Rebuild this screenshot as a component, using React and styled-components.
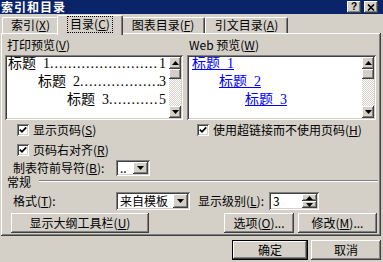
import React from 'react';
import styled, { createGlobalStyle, css } from 'styled-components';

const GlobalStyle = createGlobalStyle`
  *, *::before, *::after { box-sizing: border-box; }
  html, body { margin: 0; padding: 0; background: #d4d0c8; }
  body {
    font-family: "Noto Sans CJK SC", "Liberation Sans", sans-serif;
    font-size: 12px;
    line-height: 14px;
    color: #000;
  }
  u { text-decoration: underline; text-underline-offset: 1px; }
`;

const raised = css`
  box-shadow: inset -1px -1px #404040, inset 1px 1px #fff,
    inset -2px -2px #808080, inset 2px 2px #d4d0c8;
`;

const sunken = css`
  box-shadow: inset 1px 1px #808080, inset -1px -1px #fff,
    inset 2px 2px #404040, inset -2px -2px #d4d0c8;
`;

const Dialog = styled.div`
  width: 383px;
  height: 262px;
  background: #d4d0c8;
  overflow: hidden;
  display: flex;
  flex-direction: column;
`;

const TitleBar = styled.div`
  height: 14px;
  background: #0a246a;
  display: flex;
  align-items: center;
  justify-content: space-between;
  padding: 0 5px 0 1px;
`;

const Title = styled.div`
  color: #fff;
  font-weight: bold;
  font-size: 12px;
  line-height: 14px;
  letter-spacing: 1px;
`;

const CaptionButtons = styled.div`
  display: flex;
  gap: 3px;
`;

const CaptionButton = styled.div`
  width: 14px;
  height: 12px;
  background: #d4d0c8;
  ${raised};
  display: flex;
  align-items: center;
  justify-content: center;
  font-family: "Liberation Sans", sans-serif;
  font-weight: bold;
  font-size: 10px;
  line-height: 12px;
`;

const TabStrip = styled.div`
  height: 19px;
  display: flex;
  align-items: flex-end;
  padding-left: 2px;
`;

const Tab = styled.div`
  position: relative;
  width: ${p => p.w}px;
  height: ${p => (p.active ? 20 : 16)}px;
  margin: ${p => (p.active ? '0 -2px -2px -2px' : '0')};
  z-index: ${p => (p.active ? 2 : 1)};
  background: #d4d0c8;
  border-top: 1px solid #fff;
  border-left: 1px solid #fff;
  border-right: 1px solid #404040;
  border-radius: 2px 2px 0 0;
  box-shadow: inset -1px 0 #808080;
  display: flex;
  justify-content: center;
  padding-top: ${p => (p.active ? 1 : 0)}px;
  line-height: 14px;
  white-space: nowrap;
`;

const Focus = styled.span`
  outline: 1px dotted #000;
  padding: 0 2px;
  height: 15px;
`;

const Panel = styled.div`
  height: 203px;
  margin: 0 2px 0 1px;
  padding: 2px;
  ${raised};
  display: flex;
  flex-direction: column;
`;

const TopRow = styled.div`
  display: flex;
  gap: 4px;
  padding-left: 2px;
`;

const Column = styled.div`
  width: ${p => p.w}px;
  display: flex;
  flex-direction: column;
`;

const SectionLabel = styled.div`
  height: 20px;
  line-height: 20px;
  padding-left: 2px;
  white-space: nowrap;
`;

const PreviewBox = styled.div`
  height: 65px;
  background: #fff;
  ${sunken};
  padding: 2px;
  display: flex;
`;

const PreviewList = styled.div`
  flex: 1;
  padding: ${p => (p.web ? '0 0 0 3px' : '0 3px 0 1px')};
  margin-top: -2px;
  overflow: hidden;
`;

const TocLine = styled.div`
  display: flex;
  height: 18px;
  line-height: 18px;
  padding-left: ${p => p.indent}px;
  font-family: "Liberation Serif", "Noto Sans CJK SC", serif;
  font-size: 14px;
  white-space: nowrap;
`;

const Leader = styled.span`
  flex: 1;
  overflow: hidden;
  letter-spacing: 1px;
  &::before {
    content: "..............................................................";
  }
`;

const WebLink = styled.span`
  color: #0000ff;
  text-decoration: underline;
`;

const ScrollBar = styled.div`
  width: 12px;
  display: flex;
  flex-direction: column;
  background: repeating-conic-gradient(#d4d0c8 0 25%, #fff 0 50%) 0 0 / 2px 2px;
`;

const ScrollArrow = styled.div`
  width: 12px;
  height: 12px;
  background: #d4d0c8;
  ${raised};
  display: flex;
  align-items: center;
  justify-content: center;
`;

const ScrollThumb = styled.div`
  width: 12px;
  height: 10px;
  background: #d4d0c8;
  ${raised};
`;

const Spacer = styled.div`
  flex: 1;
`;

const CheckRow = styled.label`
  display: flex;
  align-items: center;
  gap: 4px;
  height: 16px;
  line-height: 14px;
  margin-top: ${p => p.mt}px;
  padding-left: ${p => p.indent}px;
  white-space: nowrap;
`;

const CheckBox = styled.span`
  width: 12px;
  height: 12px;
  background: #fff;
  ${sunken};
  display: flex;
  align-items: center;
  justify-content: center;
  flex: none;
`;

const FieldRow = styled.div`
  display: flex;
  align-items: center;
  height: ${p => p.h}px;
  line-height: 14px;
  margin-top: ${p => p.mt}px;
  padding-left: ${p => p.indent}px;
  white-space: nowrap;
`;

const FieldLabel = styled.span`
  width: ${p => p.w}px;
  padding-left: ${p => p.pl || 0}px;
  flex: none;
`;

const Combo = styled.div`
  width: ${p => p.w}px;
  height: 100%;
  background: #fff;
  ${sunken};
  padding: 2px;
  display: flex;
  flex: none;
`;

const ComboText = styled.div`
  flex: 1;
  padding-left: 2px;
  line-height: ${p => p.lh}px;
  white-space: nowrap;
`;

const DropButton = styled.div`
  width: 15px;
  background: #d4d0c8;
  ${raised};
  display: flex;
  align-items: center;
  justify-content: center;
`;

const SpinButtons = styled.div`
  width: 15px;
  display: flex;
  flex-direction: column;
`;

const SpinButton = styled.div`
  flex: 1;
  background: #d4d0c8;
  ${raised};
  display: flex;
  align-items: center;
  justify-content: center;
`;

const GroupHeader = styled.div`
  display: flex;
  align-items: center;
  gap: 8px;
  height: 12px;
  line-height: 12px;
  padding: 0 1px 0 4px;
  white-space: nowrap;
`;

const EtchedLine = styled.div`
  flex: 1;
  height: 2px;
  border-top: 1px solid #808080;
  border-bottom: 1px solid #fff;
  margin-top: -2px;
`;

const ButtonRow = styled.div`
  display: flex;
  align-items: center;
  height: 20px;
  margin-top: 3px;
  padding-left: 8px;
`;

const Button = styled.div`
  width: ${p => p.w}px;
  height: 20px;
  margin-left: ${p => p.ml || 0}px;
  background: #d4d0c8;
  ${raised};
  display: flex;
  align-items: center;
  justify-content: center;
  white-space: nowrap;
  line-height: 14px;
  ${p => p.primary && css`
    border: 1px solid #000;
    box-shadow: inset -1px -1px #404040, inset 1px 1px #fff,
      inset -2px -2px #808080;
  `}
`;

const Footer = styled.div`
  display: flex;
  justify-content: flex-end;
  padding: 4px 2px 0 0;
`;

const Arrow = ({ up }) => (
  <svg width="7" height="4" viewBox="0 0 7 4">
    <polygon points={up ? '0,4 7,4 3.5,0' : '0,0 7,0 3.5,4'} fill="#000" />
  </svg>
);

const Tick = () => (
  <svg width="8" height="8" viewBox="0 0 8 8">
    <polyline points="0.8,3.6 3,5.8 7.2,1.4" fill="none" stroke="#000" strokeWidth="1.8" />
  </svg>
);

const CloseGlyph = () => (
  <svg width="8" height="7" viewBox="0 0 8 7">
    <path d="M1 0.5 L7 6.5 M7 0.5 L1 6.5" stroke="#000" strokeWidth="1.6" />
  </svg>
);

const Check = ({ indent, mt, children }) => (
  <CheckRow indent={indent} mt={mt}>
    <CheckBox><Tick /></CheckBox>
    <span>{children}</span>
  </CheckRow>
);

const Scroller = () => (
  <ScrollBar>
    <ScrollArrow><Arrow up /></ScrollArrow>
    <ScrollThumb />
    <Spacer />
    <ScrollArrow><Arrow /></ScrollArrow>
  </ScrollBar>
);

const printEntries = [
  { level: 1, indent: 0, page: 1 },
  { level: 2, indent: 30, page: 3 },
  { level: 3, indent: 59, page: 5 },
];

const webEntries = [0, 27, 53];

const tabs = [
  { label: <>索引(<u>X</u>)</>, w: 57 },
  { label: <>目录(<u>C</u>)</>, w: 66, active: true },
  { label: <>图表目录(<u>F</u>)</>, w: 84 },
  { label: <>引文目录(<u>A</u>)</>, w: 83 },
];

export default function App() {
  return (
    <>
      <GlobalStyle />
      <Dialog>
        <TitleBar>
          <Title>索引和目录</Title>
          <CaptionButtons>
            <CaptionButton>?</CaptionButton>
            <CaptionButton><CloseGlyph /></CaptionButton>
          </CaptionButtons>
        </TitleBar>

        <TabStrip>
          {tabs.map((t, i) => (
            <Tab key={i} w={t.w} active={t.active}>
              {t.active ? <Focus>{t.label}</Focus> : t.label}
            </Tab>
          ))}
        </TabStrip>

        <Panel>
          <TopRow>
            <Column w={178}>
              <SectionLabel>打印预览(<u>V</u>)</SectionLabel>
              <PreviewBox>
                <PreviewList>
                  {printEntries.map(e => (
                    <TocLine key={e.level} indent={e.indent}>
                      <span>标题&nbsp;&nbsp;{e.level}</span>
                      <Leader />
                      <span>{e.page}</span>
                    </TocLine>
                  ))}
                </PreviewList>
                <Scroller />
              </PreviewBox>
              <Check indent={12} mt={2}>显示页码(<u>S</u>)</Check>
              <Check indent={12} mt={4}>页码右对齐(<u>R</u>)</Check>
              <FieldRow indent={8} h={16} mt={2}>
                <FieldLabel w={103}>制表符前导符(<u>B</u>):</FieldLabel>
                <Combo w={34}>
                  <ComboText lh={12}>..</ComboText>
                  <DropButton><Arrow /></DropButton>
                </Combo>
              </FieldRow>
            </Column>

            <Column w={189}>
              <SectionLabel>Web 预览(<u>W</u>)</SectionLabel>
              <PreviewBox>
                <PreviewList web>
                  {webEntries.map((indent, i) => (
                    <TocLine key={i} indent={indent}>
                      <WebLink>标题&nbsp;&nbsp;{i + 1}</WebLink>
                    </TocLine>
                  ))}
                </PreviewList>
                <Scroller />
              </PreviewBox>
              <Check indent={10} mt={2}>使用超链接而不使用页码(<u>H</u>)</Check>
            </Column>
          </TopRow>

          <GroupHeader>
            <span>常规</span>
            <EtchedLine />
          </GroupHeader>

          <FieldRow indent={10} h={18} mt={4}>
            <FieldLabel w={103}>格式(<u>T</u>):</FieldLabel>
            <Combo w={74}>
              <ComboText lh={14}>来自模板</ComboText>
              <DropButton><Arrow /></DropButton>
            </Combo>
            <FieldLabel w={79} pl={8}>显示级别(<u>L</u>):</FieldLabel>
            <Combo w={50}>
              <ComboText lh={14}>3</ComboText>
              <SpinButtons>
                <SpinButton><Arrow up /></SpinButton>
                <SpinButton><Arrow /></SpinButton>
              </SpinButtons>
            </Combo>
          </FieldRow>

          <ButtonRow>
            <Button w={138}>显示大纲工具栏(<u>U</u>)</Button>
            <Button w={70} ml={75}>选项(<u>O</u>)...</Button>
            <Button w={79} ml={4}>修改(<u>M</u>)...</Button>
          </ButtonRow>
        </Panel>

        <Footer>
          <Button w={76} primary>确定</Button>
          <Button w={70} ml={3}>取消</Button>
        </Footer>
      </Dialog>
    </>
  );
}
